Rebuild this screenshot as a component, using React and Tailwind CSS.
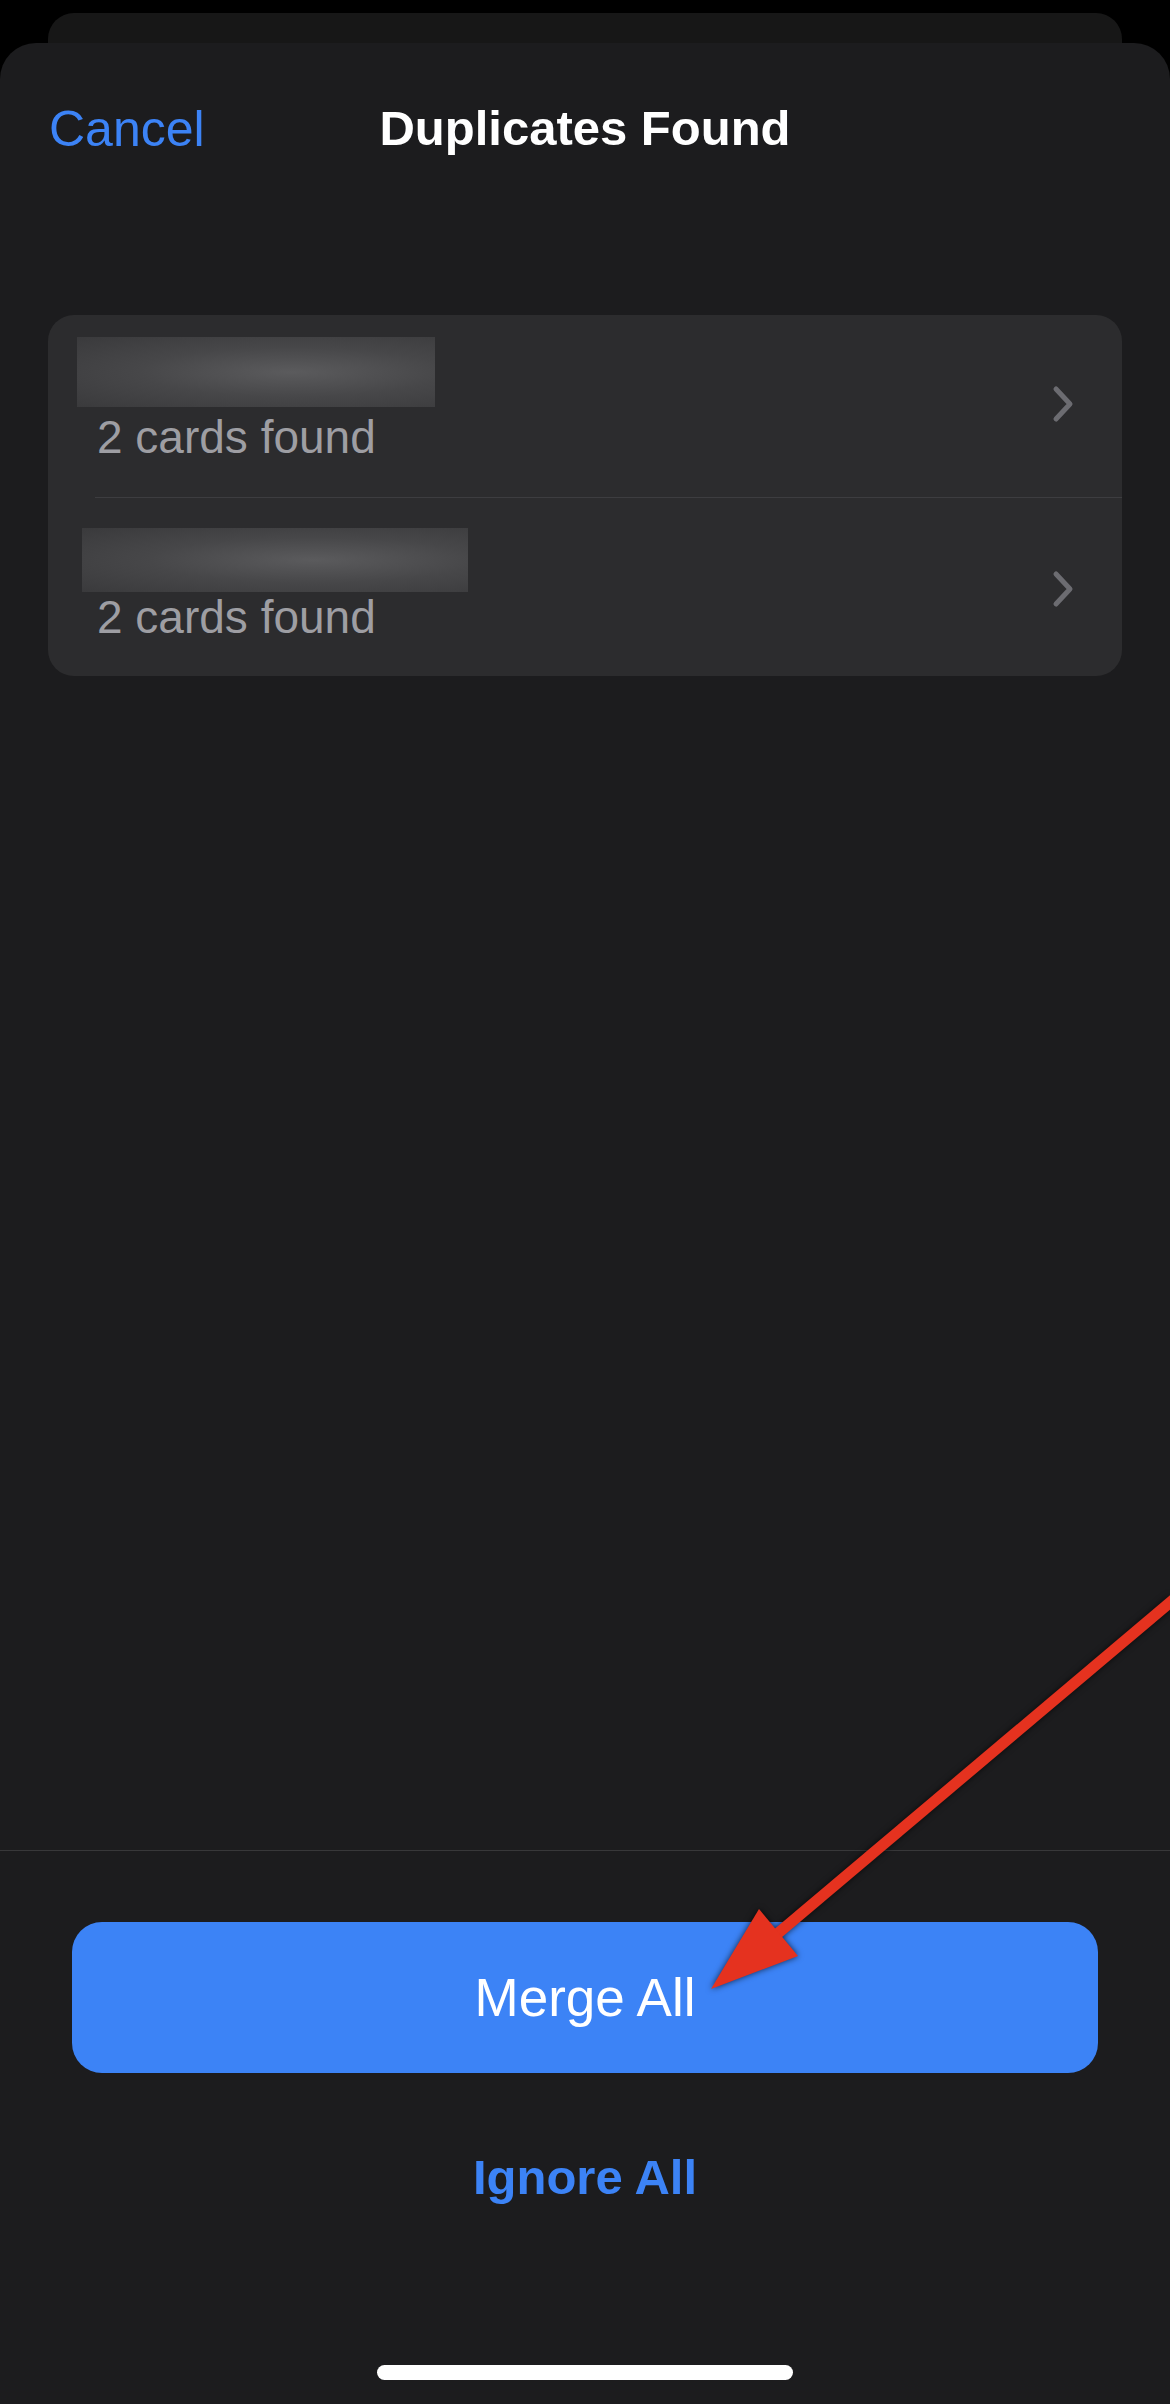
const rows = [
  { pt: "pt-[22px]", blockW: "w-[358px]", blockH: "h-[70px]", blockMl: "ml-0", gap: "mt-[7px]", pb: "pb-[37px]" },
  { pt: "pt-[30px]", blockW: "w-[386px]", blockH: "h-[64px]", blockMl: "ml-[5px]", gap: "mt-[2px]", pb: "pb-[36px]" },
];

const Chevron = () => (
  <svg className="mt-[10px]" width="22" height="38" viewBox="0 0 22 38" fill="none">
    <polyline
      points="4,4 18,19 4,34"
      stroke="#6c6c71"
      strokeWidth="5"
      strokeLinecap="round"
      strokeLinejoin="round"
    />
  </svg>
);

const App = () => {
  return (
    <div
      className="relative flex h-[2404px] w-[1170px] flex-col overflow-hidden bg-black"
      style={{ fontFamily: '"Liberation Sans", Arial, sans-serif' }}
    >
      {/* card stacked behind the sheet */}
      <div className="mx-[48px] mt-[13px] h-[30px] shrink-0 rounded-t-[26px] bg-[#171717]"></div>

      <div className="flex flex-1 flex-col rounded-t-[36px] bg-[#1c1c1e]">
        <div className="grid grid-cols-[1fr_auto_1fr] pt-[61px]">
          <span className="pl-[49px] text-[50px] leading-none text-[#3c83f6]">Cancel</span>
          <h1 className="text-[49px] font-bold leading-none text-white">Duplicates Found</h1>
          <span></span>
        </div>

        <div className="mx-[48px] mt-[161px] rounded-[26px] bg-[#2c2c2e]">
          {rows.map((row, i) => (
            <div key={i}>
              {i > 0 && <div className="ml-[47px] h-px bg-[#3d3d40]"></div>}
              <div className={`flex items-center pl-[29px] pr-[48px] ${row.pt} ${row.pb}`}>
                <div className="flex-1">
                  <div
                    className={`${row.blockW} ${row.blockH} ${row.blockMl} bg-[radial-gradient(ellipse_at_60%_50%,#5b5b5d_0%,#474749_50%,#3a3a3c_100%)]`}
                  ></div>
                  <p className={`${row.gap} pl-[20px] text-[46px] leading-none text-[#9e9ea3]`}>
                    2 cards found
                  </p>
                </div>
                <Chevron />
              </div>
            </div>
          ))}
        </div>

        <div className="flex-1"></div>

        <div className="h-px bg-[#38383a]"></div>

        <button className="mx-[72px] mt-[71px] flex h-[151px] items-center justify-center rounded-[30px] bg-[#3c83f6] text-[53px] leading-none text-white">
          Merge All
        </button>

        <button className="mt-[80px] h-[48px] text-center text-[49px] font-bold leading-none text-[#3c83f6]">
          Ignore All
        </button>

        <div className="mx-auto mb-[24px] mt-[164px] h-[15px] w-[416px] rounded-full bg-white"></div>
      </div>

      {/* annotation arrow drawn over the screenshot */}
      <svg
        className="pointer-events-none absolute inset-0 drop-shadow-[0_0_3px_rgba(0,0,0,0.7)]"
        width="1170"
        height="2404"
        viewBox="0 0 1170 2404"
      >
        <line x1="1180" y1="1594" x2="770" y2="1940" stroke="#e5321f" strokeWidth="11" />
        <polygon points="711,1989 759,1909 798,1956" fill="#e5321f" />
      </svg>
    </div>
  );
};

export default App;
